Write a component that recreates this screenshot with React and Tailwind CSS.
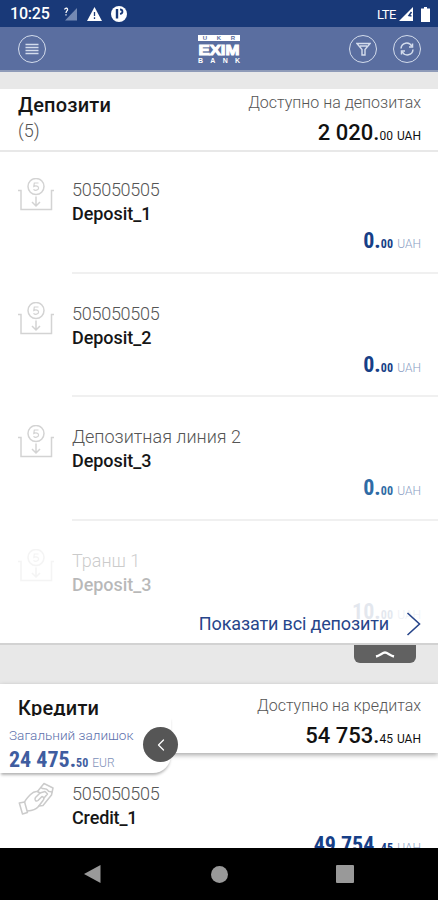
import { ChevronLeft } from 'lucide-react';

const deposits = [
  { id: 1, number: '505050505', name: 'Deposit_1', whole: '0', cents: '00' },
  { id: 2, number: '505050505', name: 'Deposit_2', whole: '0', cents: '00' },
  { id: 3, number: 'Депозитная линия 2', name: 'Deposit_3', whole: '0', cents: '00', tone: 'text-[#2f6ba5]', numberClass: 'tracking-normal' },
  { id: 4, number: 'Транш 1', name: 'Deposit_3', whole: '10', cents: '00', tone: 'text-[#4d6a96]', numberClass: 'tracking-normal', faded: true },
];

const DepositIcon = ({ className }) => (
  <svg className={className} width="36" height="36" viewBox="0 0 36 36" fill="none" stroke="#d3d3d3" strokeWidth="1.5">
    <path d="M0 12.500H3V31.500H33.500V12.500H36" />
    <circle cx="18" cy="8.500" r="8" />
    <path d="M20.500 5H16.300L15.800 8.500C18 7.300 20.600 8.100 20.600 10.100C20.600 12.500 17 12.900 15.500 11.300" strokeWidth="1.200" />
    <path d="M18 18.500V27.500M14 24L18 28L22 24" />
  </svg>
);

const CreditIcon = () => (
  <svg width="38" height="36" viewBox="0 0 38 36" fill="none" stroke="#cbcbcb" strokeWidth="1.5" strokeLinejoin="round" strokeLinecap="round">
    <path d="M1.300 21L6.600 20L9.500 30.500L4.500 32Z" />
    <path d="M6.600 20C8 17 10 15 12.500 12.500C14.500 10.500 17 9 19.500 9.500L22 11L17.500 15.500C16 18 18 20 20 18.500L24 14.500C26 15 26.500 17 25 18.500L20 25C18 27.500 15 28.500 9.500 29" />
    <path d="M19.500 9.500L26 1.500L35 6L33.500 13L25 23.500L21 24" />
    <path d="M23 5.500C25 8 28 5.500 29.500 8C30.500 10.500 33 9.500 34 10M22 11L27 9.500L29.500 12L26 16" />
  </svg>
);

const Amount = ({ whole, cents, currency = 'UAH', className = '', minorClass = '', currencyClass = '' }) => (
  <div className={`flex items-baseline whitespace-pre ${className}`}>
    <span className="text-[22px] leading-6">{whole}.</span>
    <span className={`text-[12px] ${minorClass}`}>{cents}</span>
    <span className={`ml-1 text-[12px] ${currencyClass}`}>{currency}</span>
  </div>
);

const SectionHeader = ({ title, count, label, whole, cents, className }) => (
  <div className={`flex shrink-0 justify-between bg-white pl-[18px] pr-[17px] ${className}`}>
    <div>
      <h2 className="mt-1 text-[20px] font-medium leading-6 tracking-[0.2px] text-[#161616]">{title}</h2>
      {count && <p className="text-[18px] font-light leading-7 text-[#555]">({count})</p>}
    </div>
    <div className="flex flex-col items-end">
      <p className="mt-[4px] text-[16px] font-light leading-5 text-[#555]">{label}</p>
      <Amount whole={whole} cents={cents} className="mt-[8px] font-medium text-[#111]" minorClass="font-normal" currencyClass="font-normal" />
    </div>
  </div>
);

const AccountAmount = ({ className = '', ...props }) => (
  <Amount
    {...props}
    className={`font-bold font-stretch-condensed ${className}`}
    minorClass="tracking-[0.200px]"
    currencyClass="font-light font-stretch-normal text-[#8aa0c4]"
  />
);

const DepositRow = ({ number, name, whole, cents, tone = 'text-[#173f87]', numberClass = 'tracking-[-0.260px]', faded }) => (
  <div className={`flex h-[123.700px] shrink-0 pl-[18px] ${faded ? 'opacity-30' : ''}`}>
    <DepositIcon className={`mt-[28px] shrink-0 ${faded ? 'opacity-80' : ''}`} />
    <div className={`ml-[18px] flex flex-1 flex-col pr-[17px] pt-[28px] ${faded ? '' : 'border-b-2 border-[#f0f0f0]'}`}>
      <p className={`text-[18px] font-light leading-6 text-[#555] ${numberClass}`}>{number}</p>
      <p className="text-[18px] font-medium leading-6 tracking-[-0.050px] text-[#161616]">{name}</p>
      <AccountAmount whole={whole} cents={cents} className={`mt-[3px] self-end ${faded ? 'opacity-50' : ''} ${tone}`} />
    </div>
  </div>
);

const CircleButton = ({ children }) => (
  <button className="flex size-[28px] items-center justify-center rounded-full border-[1.500px] border-[#d3dcec] text-[#d3dcec]">
    {children}
  </button>
);

const BankLogo = () => (
  <div className="flex w-[42px] flex-col font-['Liberation_Sans'] font-bold text-white">
    <div className="flex h-[6px] items-center justify-around bg-white text-[6px] leading-none text-[#5a6c9e]">
      <span>U</span><span>K</span><span>R</span>
    </div>
    <svg className="mt-[2px] overflow-visible" width="42" height="12" viewBox="0 0 42 12">
      <text x="0.500" y="11.500" fontSize="15.500" textLength="41" lengthAdjust="spacingAndGlyphs" fill="#fff" stroke="#fff" strokeWidth="1.100">EXIM</text>
    </svg>
    <div className="mt-[2px] flex justify-between text-[7px] leading-[7px]">
      <span>B</span><span>A</span><span>N</span><span>K</span>
    </div>
  </div>
);

const StatusBar = () => (
  <div className="flex h-[27px] shrink-0 items-center bg-[#193978] pl-[10px] pr-[8px] pt-px text-white">
    <span className="text-[16px] font-medium leading-none tracking-[-0.200px]">10:25</span>
    <svg className="ml-[13px]" width="15" height="14" viewBox="0 0 15 14">
      <path d="M14 1V13.500H2Z" fill="#7489b3" />
      <path d="M1.500 2.500C2.500 0.500 5 1 4.500 3C4.200 4 3 4 3 6M3 7.300V8.600" fill="none" stroke="#fff" strokeWidth="1.300" />
    </svg>
    <svg className="ml-[9px]" width="15" height="14" viewBox="0 0 15 14">
      <path d="M7.500 0L15 14H0Z" fill="#fff" />
      <path d="M7.500 5V9M7.500 10.300V12" stroke="#193978" strokeWidth="1.300" />
    </svg>
    <svg className="ml-[9px]" width="16" height="16" viewBox="0 0 16 16">
      <circle cx="8" cy="8" r="8" fill="#fff" />
      <path d="M6 3V12.500" fill="none" stroke="#193978" strokeWidth="2.400" />
      <path d="M9 3.500C12 3.500 12.500 7.500 9 7.800" fill="none" stroke="#193978" strokeWidth="1.800" />
    </svg>
    <span className="ml-auto text-[13px] leading-none tracking-[-0.500px]">LTE</span>
    <svg className="ml-[3px]" width="14" height="14" viewBox="0 0 14 14">
      <path d="M14 0V14H0Z" fill="#fff" />
      <path d="M12.500 5L10 8.500L12.500 9" fill="none" stroke="#193978" strokeWidth="1.500" />
    </svg>
    <svg className="ml-[8px]" width="9" height="15" viewBox="0 0 9 15">
      <path d="M3 0H6V1.500H9V15H0V1.500H3Z" fill="#fff" />
    </svg>
  </div>
);

export default function App() {
  return (
    <div className="relative flex h-[900px] w-[438px] flex-col overflow-hidden bg-[#e8e8e8] font-['Roboto',sans-serif]">
      <StatusBar />
      <header className="flex h-[45px] shrink-0 items-center border-b-2 border-[#8f9bb8] bg-[#5a6ea0] pl-[18px] pr-[17px]">
        <CircleButton>
          <svg width="14" height="12" viewBox="0 0 14 12" fill="none" stroke="currentColor" strokeWidth="1.600">
            <path d="M0.500 1.500H13.500M0.500 4.500H13.500M0.500 7.500H13.500M0.500 10.500H13.500" />
          </svg>
        </CircleButton>
        <div className="ml-[152px] pt-px"><BankLogo /></div>
        <div className="ml-auto flex gap-[16px]">
          <CircleButton>
            <svg width="15" height="14" viewBox="0 0 15 14" fill="none" stroke="currentColor" strokeWidth="1.400">
              <path d="M1 1.500H14L9 7.500V13H6V7.500ZM4 4H11" />
            </svg>
          </CircleButton>
          <CircleButton>
            <svg width="16" height="14" viewBox="0 0 16 14" fill="none" stroke="currentColor" strokeWidth="1.500">
              <path d="M2 6.500C2.500 0.500 10 -1 13 4.500M14 7.500C13.500 13.500 6 15 3 9.500" />
              <path d="M13.500 1.500V5H10M2.500 12.500V9H6" />
            </svg>
          </CircleButton>
        </div>
      </header>

      <SectionHeader title="Депозити" count="5" label="Доступно на депозитах" whole="2 020" cents="00" className="mt-[17px] h-[63px] border-b-2 border-[#e8e8e8]" />

      <section className="relative flex h-[493px] shrink-0 flex-col overflow-hidden border-b-2 border-[#d2d2d2] bg-white">
        <div className="-mt-[2px] flex flex-col">
          {deposits.map(({ id, ...deposit }) => <DepositRow key={id} {...deposit} />)}
        </div>
        <button className="absolute bottom-[7px] right-[17px] flex items-center text-[18px] leading-6 tracking-[-0.140px] text-[#27458a]">
          Показати всі депозити
          <svg className="ml-[17px]" width="15" height="24" viewBox="0 0 15 24" fill="none" stroke="currentColor" strokeWidth="1.600">
            <path d="M1.500 1L13.500 12L1.500 23" />
          </svg>
        </button>
      </section>

      <div className="flex h-[39px] shrink-0 justify-end pr-[22px]">
        <div className="flex h-[18px] w-[62px] items-center justify-center rounded-b-[6px] bg-[#616161]">
          <svg width="20" height="8" viewBox="0 0 20 8" fill="none" stroke="#fff" strokeWidth="2.400">
            <path d="M1 6.500C5 5.500 7.500 2.500 10 2.500S15 5.500 19 6.500" />
          </svg>
        </div>
      </div>

      <SectionHeader title="Кредити" label="Доступно на кредитах" whole="54 753" cents="45" className="relative h-[69px] pt-[8px] shadow-[0_2px_5px_rgba(0,0,0,0.35)]" />

      <section className="flex h-[95px] shrink-0 overflow-hidden bg-white pl-[18px] pt-[29px]">
        <CreditIcon />
        <div className="ml-[16px] flex flex-1 flex-col pr-[17px]">
          <p className="text-[18px] font-light leading-6 tracking-[-0.260px] text-[#555]">505050505</p>
          <p className="text-[18px] font-medium leading-6 tracking-[-0.150px] text-[#161616]">Credit_1</p>
          <AccountAmount whole="49 754" cents="45" className="mt-[3px] self-end text-[#173f87]" />
        </div>
      </section>

      <nav className="flex flex-1 items-center bg-black pl-[83px]">
        <svg width="18" height="20" viewBox="0 0 18 20"><path d="M17.500 1V19L1 10Z" fill="#999" /></svg>
        <div className="ml-[110px] size-[17px] rounded-full bg-[#999]" />
        <div className="ml-[108px] size-[18px] rounded-[1px] bg-[#999]" />
      </nav>

      <div className="absolute left-0 top-[716px] h-[57px] w-[171px] rounded-br-[18px] bg-white pl-[9px] pt-[9px] shadow-[0_3px_3px_-1px_rgba(0,0,0,0.3)]">
        <p className="text-[13.600px] font-light leading-5 text-[#5c70ac]">Загальний залишок</p>
        <Amount
          whole="24 475"
          cents="50"
          currency="EUR"
          className="mt-[3px] font-bold font-stretch-condensed text-[#3f5da0]"
          currencyClass="font-light font-stretch-normal text-[#8090b8]"
        />
      </div>
      <button className="absolute left-[143px] top-[727px] flex size-[35px] items-center justify-center rounded-full bg-[#565656] text-white">
        <ChevronLeft size={20} strokeWidth={1.500} />
      </button>
    </div>
  );
}
